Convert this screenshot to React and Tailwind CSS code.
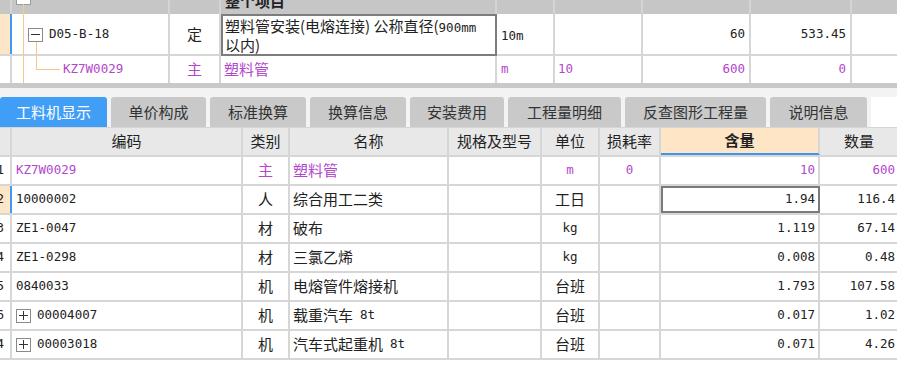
const cjk = "font-['Noto_Sans_CJK_SC',sans-serif]";
const mono = "font-['DejaVu_Sans_Mono','Noto_Sans_CJK_SC',monospace]";
const purple = "text-[#b347cc]";

const topCols = [12, 158, 51, 276, 58, 88, 108, 101, 60];
const lowCols = [12, 231, 47, 159, 93, 58, 61, 159, 80];

function Cell({ w, className = "", children }) {
  return (
    <div
      className={`shrink-0 h-full flex items-center border-r-2 border-[#d6d6d6] overflow-hidden ${className}`}
      style={{ width: w }}
    >
      {children}
    </div>
  );
}

function Box({ sign }) {
  return (
    <span className="w-[15px] h-[14px] border border-[#8a8a8a] bg-white flex items-center justify-center shrink-0 relative">
      <span className="absolute w-[9px] h-px bg-[#333]" />
      {sign === "+" && <span className="absolute h-[9px] w-px bg-[#333]" />}
    </span>
  );
}

function TopSection() {
  return (
    <div className="relative">
      {/* header band, mostly scrolled away */}
      <div className="h-[14px] flex bg-[#c6c6c6] overflow-hidden">
        {topCols.map((w, i) => (
          <div
            key={i}
            className="shrink-0 h-full border-r-2 border-[#d4d4d4] relative"
            style={{ width: w }}
          >
            {i === 1 && (
              <div className="absolute left-[4px] -top-[10px] w-[15px] h-[15px] bg-white border border-[#9a9a9a]" />
            )}
            {i === 3 && (
              <div className={`${cjk} font-bold text-[15px] leading-[15px] text-[#222] pl-[4px] -mt-[7px]`}>
                整个项目
              </div>
            )}
          </div>
        ))}
      </div>

      {/* row 1 */}
      <div className="h-[42px] flex items-start border-b-2 border-[#d6d6d6] text-[#222]">
        <Cell w={12} className="bg-[#fde6c8] border-r-[#3d9bf0]" />
        <Cell w={158} className="pl-[16px] gap-[6px]">
          <span className="mt-[1px]"><Box sign="-" /></span>
          <span className={`${mono} text-[12.5px]`}>D05-B-18</span>
        </Cell>
        <Cell w={51} className={`${cjk} text-[15px] justify-center`}>定</Cell>
        <Cell w={276} className="!h-[42px] relative border-2 !border-[#7d7d7d] !items-start pl-[2px]">
          <div className={`${cjk} text-[15px] leading-[19px] whitespace-nowrap`}>
            <div>
              塑料管安装(电熔连接) 公称直径(<span className={`${mono} text-[12.5px] leading-[12px]`}>900mm</span>
            </div>
            <div>以内)</div>
          </div>
        </Cell>
        <Cell w={58} className={`${mono} text-[12.5px] pl-[4px] pt-[4px]`}>10m</Cell>
        <Cell w={88} />
        <Cell w={108} className={`${mono} text-[12.5px] justify-end pr-[4px]`}>60</Cell>
        <Cell w={101} className={`${mono} text-[12.5px] justify-end pr-[4px]`}>533.45</Cell>
        <Cell w={60} />
      </div>

      {/* row 2 */}
      <div className={`h-[27px] flex ${purple}`}>
        <Cell w={12} />
        <Cell w={158} className={`${mono} text-[12.5px] pl-[51px]`}>KZ7W0029</Cell>
        <Cell w={51} className={`${cjk} text-[15px] justify-center`}>主</Cell>
        <Cell w={276} className={`${cjk} text-[15px] pl-[3px]`}>塑料管</Cell>
        <Cell w={58} className={`${mono} text-[12.5px] pl-[4px]`}>m</Cell>
        <Cell w={88} className={`${mono} text-[12.5px] pl-[3px]`}>10</Cell>
        <Cell w={108} className={`${mono} text-[12.5px] justify-end pr-[4px]`}>600</Cell>
        <Cell w={101} className={`${mono} text-[12.5px] justify-end pr-[4px]`}>0</Cell>
        <Cell w={60} />
      </div>

      {/* tree connectors */}
      <svg className="absolute left-0 top-0 pointer-events-none" width="170" height="83">
        <line x1="23.5" y1="4" x2="23.5" y2="83" stroke="#f7c88c" strokeWidth="1" />
        <line x1="36.5" y1="42" x2="36.5" y2="69.5" stroke="#f7c88c" strokeWidth="1" />
        <line x1="36" y1="69.5" x2="60" y2="69.5" stroke="#f7c88c" strokeWidth="1" />
      </svg>
    </div>
  );
}

const tabs = [
  ["工料机显示", 107],
  ["单价构成", 95],
  ["标准换算", 96],
  ["换算信息", 96],
  ["安装费用", 94],
  ["工程量明细", 113],
  ["反查图形工程量", 141],
  ["说明信息", 97],
];

function Tabs() {
  return (
    <div className="h-[30px] flex gap-[4px] items-end bg-[#f3f3f3]">
      {tabs.map(([t, w], i) => (
        <div
          key={t}
          className={`${cjk} text-[15px] h-[30px] rounded-t-[3px] flex items-center justify-center shrink-0 ${
            i === 0 ? "bg-[#419ef7] text-white" : "bg-[#c9c9c9] text-[#333]"
          }`}
          style={{ width: w }}
        >
          {t}
        </div>
      ))}
      <div className="flex-1 h-full bg-white" />
    </div>
  );
}

const heads = ["", "编码", "类别", "名称", "规格及型号", "单位", "损耗率", "含量", "数量"];

const rows = [
  { n: "1", code: "KZ7W0029", type: "主", name: "塑料管", unit: "m", loss: "0", qty: "10", amt: "600", main: true },
  { n: "2", code: "10000002", type: "人", name: "综合用工二类", unit: "工日", qty: "1.94", amt: "116.4", sel: true },
  { n: "3", code: "ZE1-0047", type: "材", name: "破布", unit: "kg", qty: "1.119", amt: "67.14" },
  { n: "4", code: "ZE1-0298", type: "材", name: "三氯乙烯", unit: "kg", qty: "0.008", amt: "0.48" },
  { n: "5", code: "0840033", type: "机", name: "电熔管件熔接机", unit: "台班", qty: "1.793", amt: "107.58" },
  { n: "6", code: "00004007", type: "机", name: "载重汽车", suffix: "8t", unit: "台班", qty: "0.017", amt: "1.02", plus: true },
  { n: "4", code: "00003018", type: "机", name: "汽车式起重机", suffix: "8t", unit: "台班", qty: "0.071", amt: "4.26", plus: true },
];

function LowerTable() {
  return (
    <div className="border-t border-[#d6d6d6]">
      <div className="h-[29px] flex bg-[#e8e8e8] border-b-2 border-[#d6d6d6] text-[#222]">
        {heads.map((h, i) => (
          <Cell
            key={i}
            w={lowCols[i]}
            className={`${cjk} text-[15px] justify-center ${
              i === 7 ? "bg-[#fde5c5] font-bold border-b-2 border-b-[#3d95f0]" : ""
            }`}
          >
            {h}
          </Cell>
        ))}
      </div>
      {rows.map((r, idx) => {
        const tone = r.main ? purple : "text-[#222]";
        const latin = `${mono} text-[12.5px]`;
        return (
          <div key={idx} className={`h-[29px] flex border-b-2 border-[#d6d6d6] ${tone}`}>
            <Cell
              w={12}
              className={`${latin} justify-end pr-[6px] ${r.sel ? "bg-[#fde6c8] border-r-[#3d9bf0]" : ""} text-[#222]`}
            >
              <span className="shrink-0">{r.n}</span>
            </Cell>
            <Cell w={231} className={`${latin} pl-[4px] gap-[6px]`}>
              {r.plus && <Box sign="+" />}
              {r.code}
            </Cell>
            <Cell w={47} className={`${cjk} text-[15px] justify-center`}>{r.type}</Cell>
            <Cell w={159} className={`${cjk} text-[15px] pl-[3px]`}>
              {r.name}
              {r.suffix && <span className={`${latin} ml-[7px]`}>{r.suffix}</span>}
            </Cell>
            <Cell w={93} />
            <Cell
              w={58}
              className={`justify-center ${/^[a-z]+$/.test(r.unit) ? latin : `${cjk} text-[15px]`}`}
            >
              {r.unit}
            </Cell>
            <Cell w={61} className={`${latin} justify-center`}>{r.loss || ""}</Cell>
            <Cell
              w={159}
              className={`${latin} justify-end pr-[3px] ${r.sel ? "border-2 !border-[#7a7a7a]" : ""}`}
            >
              {r.qty}
            </Cell>
            <Cell w={80} className={`${latin} justify-end pr-[3px]`}>{r.amt}</Cell>
          </div>
        );
      })}
    </div>
  );
}

export default function App() {
  return (
    <div className="w-[897px] h-[382px] overflow-hidden bg-white">
      <div className="w-[920px]">
        <TopSection />
        <div className="h-[5px] bg-[#c9c9c9]" />
        <div className="h-[9px] bg-[#f3f3f3]" />
        <Tabs />
        <LowerTable />
      </div>
    </div>
  );
}
